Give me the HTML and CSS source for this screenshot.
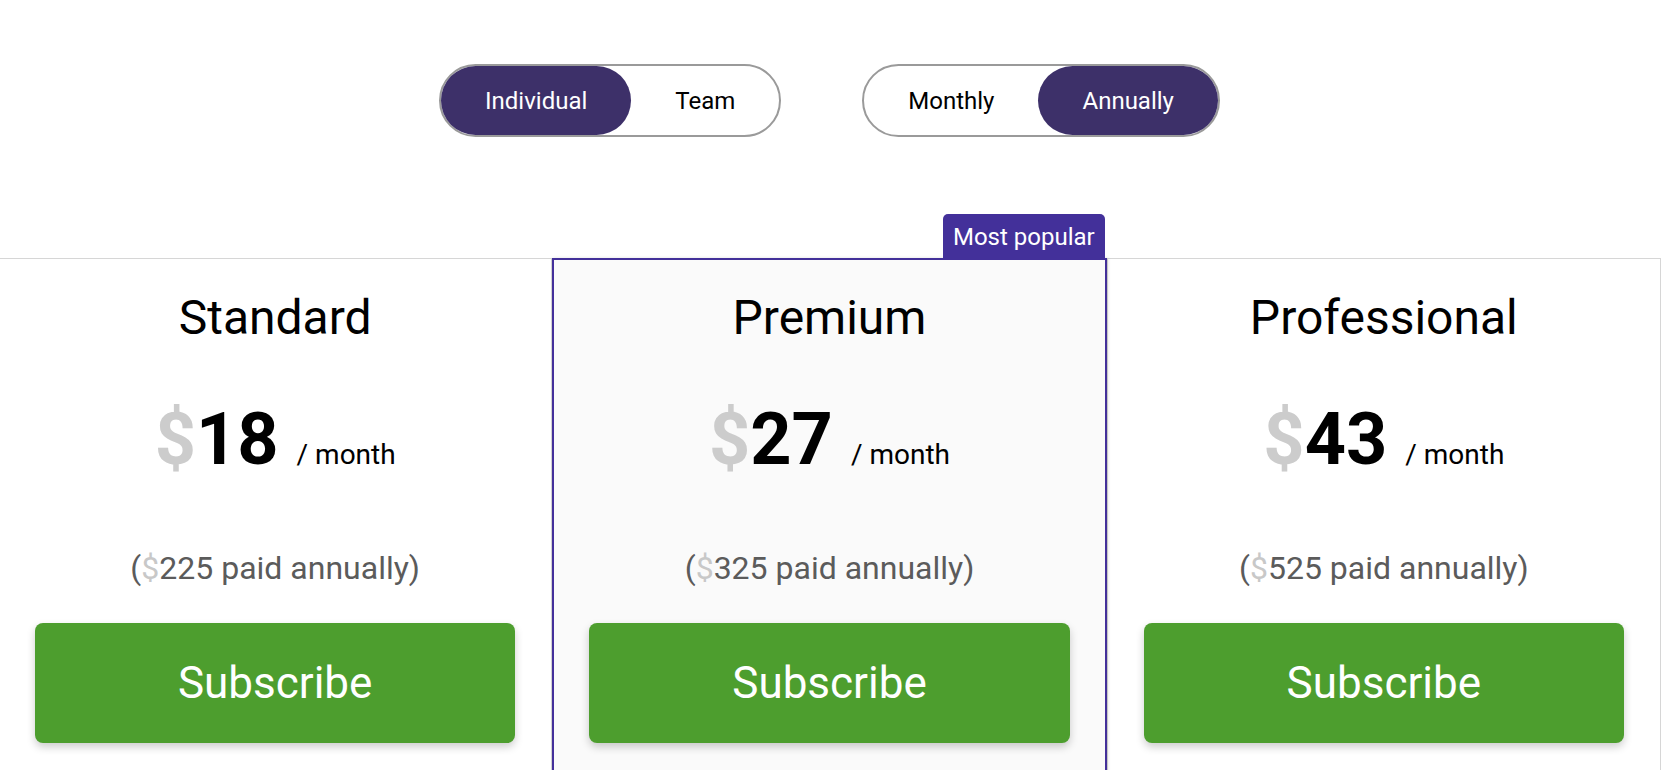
FILE: index.html
```html
<!DOCTYPE html>
<html lang="en">
<head>
<meta charset="utf-8">
<title>Pricing</title>
<link rel="stylesheet" href="styles.css">
</head>
<body>
<div class="page">
  <div class="switches">
    <div class="toggle">
      <button class="opt active">Individual</button>
      <button class="opt">Team</button>
    </div>
    <div class="toggle">
      <button class="opt">Monthly</button>
      <button class="opt active">Annually</button>
    </div>
  </div>

  <div class="plans">
    <div class="plan">
      <h2 class="plan-name">Standard</h2>
      <div class="price"><span class="cur">$</span><span class="amt">18</span><span class="per">/ month</span></div>
      <p class="billed">(<span class="cur-sm">$</span>225 paid annually)</p>
      <button class="subscribe">Subscribe</button>
    </div>
    <div class="plan popular">
      <div class="badge">Most popular</div>
      <h2 class="plan-name">Premium</h2>
      <div class="price"><span class="cur">$</span><span class="amt">27</span><span class="per">/ month</span></div>
      <p class="billed">(<span class="cur-sm">$</span>325 paid annually)</p>
      <button class="subscribe">Subscribe</button>
    </div>
    <div class="plan">
      <h2 class="plan-name">Professional</h2>
      <div class="price"><span class="cur">$</span><span class="amt">43</span><span class="per">/ month</span></div>
      <p class="billed">(<span class="cur-sm">$</span>525 paid annually)</p>
      <button class="subscribe">Subscribe</button>
    </div>
  </div>
</div>
</body>
</html>
```
FILE: styles.css
```css
* {
  box-sizing: border-box;
}

html,
body {
  margin: 0;
  overflow: hidden;
}

body {
  font-family: Roboto, "Liberation Sans", Arial, sans-serif;
  background: #ffffff;
  color: #000000;
}

.page {
  width: 1663px;
  margin-left: -2px;
}

.switches {
  display: flex;
  justify-content: center;
  gap: 81px;
  padding-top: 64px;
}

.toggle {
  display: flex;
  border: 2px solid #9a9a9a;
  border-radius: 40px;
  background: #ffffff;
}

.opt {
  height: 69px;
  padding: 0 44px;
  border: 0;
  border-radius: 35px;
  background: transparent;
  color: #000000;
  font-family: inherit;
  font-size: 24px;
  line-height: 28px;
  cursor: pointer;
}

.opt.active {
  background: #3d3069;
  color: #ffffff;
}

.plans {
  display: flex;
  margin-top: 121px;
}

.plan {
  position: relative;
  flex: 1 1 0;
  padding: 31px 36px 80px;
  border: 1px solid #d6d6d6;
  background: #ffffff;
  text-align: center;
}

.plan.popular {
  padding: 30px 35px 80px;
  border: 2px solid #43309a;
  background: #fafafa;
  box-shadow: 1px 0 3px rgba(0, 0, 0, 0.12);
  z-index: 1;
}

.badge {
  position: absolute;
  right: 0;
  bottom: 100%;
  height: 46px;
  padding: 0 10px;
  border-radius: 5px 5px 0 0;
  background: #43309a;
  color: #ffffff;
  font-size: 24px;
  line-height: 46px;
}

.plan-name {
  margin: 0;
  font-size: 48px;
  font-weight: 400;
  line-height: 56px;
}

.price {
  margin-top: 52px;
  font-size: 72px;
  font-weight: 700;
  line-height: 84px;
}

.cur {
  color: #cccccc;
}

.per {
  margin-left: 18px;
  font-size: 28px;
  font-weight: 400;
  line-height: 1;
}

.billed {
  margin: 68px 0 0;
  color: #5b5b5b;
  font-size: 32px;
  line-height: 37px;
}

.cur-sm {
  color: #c8c8c8;
}

.subscribe {
  display: block;
  width: 100%;
  height: 120px;
  margin-top: 36px;
  border: 0;
  border-radius: 8px;
  background: #4d9e2e;
  color: #ffffff;
  font-family: inherit;
  font-size: 44px;
  box-shadow: 0 4px 8px rgba(0, 0, 0, 0.2);
  cursor: pointer;
}
```
